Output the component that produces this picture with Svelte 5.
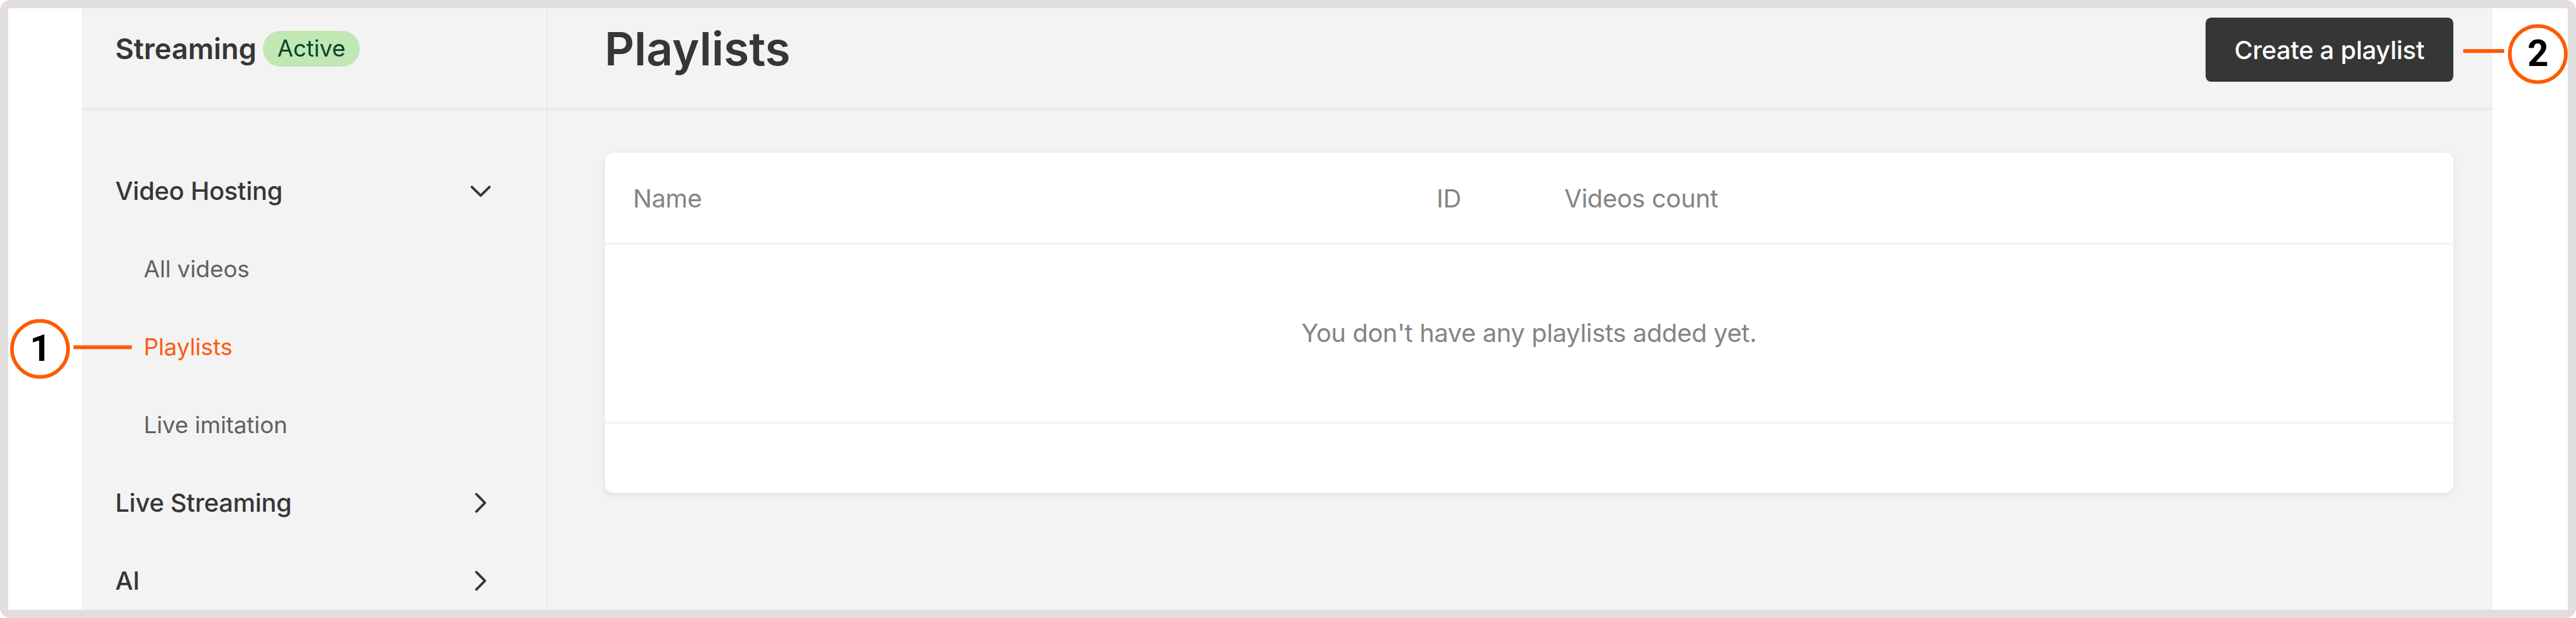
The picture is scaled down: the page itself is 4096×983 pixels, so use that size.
<script>
  const nav = [
    { label: 'Video Hosting', open: true, children: ['All videos', 'Playlists', 'Live imitation'] },
    { label: 'Live Streaming', open: false, children: [] },
    { label: 'AI', open: false, children: [] }
  ];
  const active = 'Playlists';
  const columns = ['Name', 'ID', 'Videos count'];
</script>

<div class="frame">
  <div class="panel">
    <aside class="sidebar">
      <header class="side-head">
        <span class="product">Streaming</span>
        <span class="badge">Active</span>
      </header>
      <nav class="nav">
        {#each nav as group}
          <div class="item group">
            <span>{group.label}</span>
            <svg class="chevron" viewBox="0 0 40 40" aria-hidden="true">
              {#if group.open}
                <path d="M2.8 11.4 20 28.3 37.2 11.4" />
              {:else}
                <path d="M11.7 3.7 28.3 20.6 11.7 37.5" />
              {/if}
            </svg>
          </div>
          {#each group.children as child}
            <div class="item child" class:active={child === active}>{child}</div>
          {/each}
        {/each}
      </nav>
    </aside>

    <main class="main">
      <header class="main-head">
        <h1>Playlists</h1>
        <button type="button">Create a playlist</button>
      </header>
      <div class="content">
        <section class="card">
          <div class="columns">
            {#each columns as column}
              <span>{column}</span>
            {/each}
          </div>
          <div class="empty">You don't have any playlists added yet.</div>
          <div class="foot"></div>
        </section>
      </div>
    </main>
  </div>

  <svg class="callout one" viewBox="0 0 240 118">
    <circle cx="59.7" cy="59" r="54.8" />
    <rect x="125" y="52" width="114" height="7.4" />
    <text x="60.5" y="82" text-anchor="middle">1</text>
  </svg>
  <svg class="callout two" viewBox="0 0 206 118">
    <circle cx="146.6" cy="59" r="54.8" />
    <rect x="0.8" y="49.3" width="80.2" height="7.4" />
    <text x="147" y="82" text-anchor="middle">2</text>
  </svg>
</div>

<style>
  :global(body) {
    margin: 0;
    background: #fff;
    overflow: hidden;
  }

  .frame {
    --u: 0.814px;
    position: relative;
    box-sizing: border-box;
    width: 4096px;
    height: 983px;
    border: 13px solid #e2dedd;
    border-radius: calc(20 * var(--u));
    background: #fff;
    overflow: hidden;
    font-family: Inter, 'Liberation Sans', sans-serif;
    font-size: calc(49.1 * var(--u));
    letter-spacing: calc(-0.3 * var(--u));
    color: #363636;
  }

  .panel {
    display: flex;
    height: 100%;
    margin-left: calc(144 * var(--u));
    width: calc(4708 * var(--u));
    background: #f3f3f3;
    overflow: hidden;
  }

  .sidebar {
    flex: none;
    box-sizing: border-box;
    width: calc(910.4 * var(--u));
    border-right: 2px solid #e7e7e7;
  }

  .main {
    flex: 1;
    min-width: 0;
  }

  .side-head,
  .main-head {
    display: flex;
    align-items: center;
    box-sizing: border-box;
    height: calc(199 * var(--u));
    padding-bottom: calc(37 * var(--u));
    border-bottom: 3px solid #e8e8e8;
  }

  .side-head {
    gap: calc(12.6 * var(--u));
    padding-left: calc(65.2 * var(--u));
  }

  .product {
    font-size: calc(55.7 * var(--u));
    font-weight: 600;
    letter-spacing: 0;
  }

  .badge {
    display: flex;
    align-items: center;
    justify-content: center;
    width: calc(189.4 * var(--u));
    height: calc(70 * var(--u));
    border-radius: calc(35 * var(--u));
    background: #c1e7b5;
    color: #07452b;
    font-size: calc(45 * var(--u));
    letter-spacing: 0;
  }

  .nav {
    padding-top: calc(82.2 * var(--u));
  }

  .item {
    display: flex;
    align-items: center;
    height: calc(152.3 * var(--u));
  }

  .group {
    justify-content: space-between;
    padding-left: calc(65.2 * var(--u));
    padding-right: calc(108.5 * var(--u));
    font-weight: 500;
  }

  .child {
    padding-left: calc(120.8 * var(--u));
    font-size: calc(45.4 * var(--u));
    letter-spacing: calc(-0.15 * var(--u));
    color: #616161;
  }

  .child.active {
    color: #ff5913;
  }

  .chevron {
    width: calc(40 * var(--u));
    height: calc(40 * var(--u));
    fill: none;
    stroke: #363636;
    stroke-width: 4.8;
    stroke-linecap: round;
    stroke-linejoin: round;
  }

  .main-head {
    justify-content: space-between;
    padding-left: calc(110.5 * var(--u));
    padding-right: calc(76 * var(--u));
  }

  h1 {
    margin: 0;
    font-size: calc(90.3 * var(--u));
    font-weight: 600;
    letter-spacing: 0;
  }

  button {
    width: calc(483.5 * var(--u));
    height: calc(125.5 * var(--u));
    margin: calc(4 * var(--u)) 0 0;
    padding: 0;
    border: 0;
    border-radius: calc(11 * var(--u));
    background: #363636;
    color: #fff;
    font: inherit;
    font-weight: 500;
    letter-spacing: inherit;
  }

  .content {
    padding: calc(83 * var(--u)) calc(76 * var(--u)) 0 calc(111 * var(--u));
  }

  .card {
    display: flex;
    flex-direction: column;
    height: calc(665 * var(--u));
    border-radius: calc(17 * var(--u));
    background: #fff;
    box-shadow: 0 calc(4 * var(--u)) calc(13 * var(--u)) rgba(0, 0, 0, 0.08);
    color: #848484;
    letter-spacing: calc(-0.38 * var(--u));
  }

  .columns {
    display: grid;
    grid-template-columns: calc(1570 * var(--u)) calc(249.5 * var(--u)) 1fr;
    align-items: center;
    box-sizing: border-box;
    height: calc(180 * var(--u));
    padding: calc(3 * var(--u)) 0 0 calc(55 * var(--u));
    border-bottom: 3px solid #f3f3f3;
  }

  .empty {
    display: flex;
    align-items: center;
    justify-content: center;
    box-sizing: border-box;
    height: calc(350 * var(--u));
    border-bottom: 3px solid #f3f3f3;
  }

  .foot {
    flex: 1;
  }

  .callout {
    position: absolute;
    height: calc(118 * var(--u));
    letter-spacing: 0;
  }

  .callout circle {
    fill: #fff;
    stroke: #ff5a00;
    stroke-width: 7;
  }

  .callout rect {
    fill: #ff5a00;
  }

  .callout text {
    font-family: Roboto, sans-serif;
    font-size: 72px;
    font-weight: 700;
    fill: #000;
  }

  .one {
    left: calc(3 * var(--u));
    top: calc(607 * var(--u));
    width: calc(240 * var(--u));
  }

  .two {
    left: calc(4795 * var(--u));
    top: calc(31 * var(--u));
    width: calc(206 * var(--u));
  }
</style>
